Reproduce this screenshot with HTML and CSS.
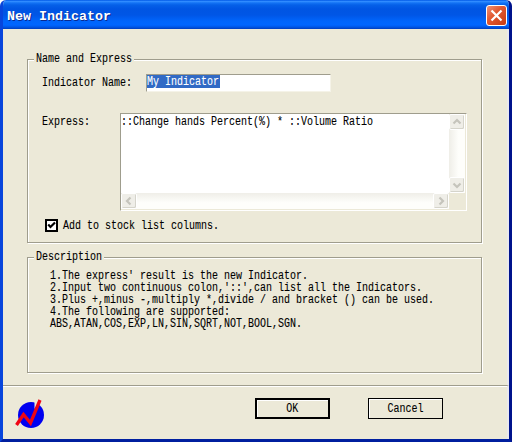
FILE: index.html
```html
<!DOCTYPE html>
<html lang="en">
<head>
<meta charset="utf-8">
<title>New Indicator</title>
<link rel="stylesheet" href="styles.css">
</head>
<body>
<div class="window">
  <header class="titlebar">
    <h1 class="title">New Indicator</h1>
    <button class="close" aria-label="Close"><svg width="21" height="21" viewBox="0 0 21 21"><path d="M5.500 5.500l10 10M15.500 5.500l-10 10" stroke="#fff" stroke-width="2.2" fill="none"/></svg></button>
  </header>
  <main class="content">
    <section class="group group-express">
      <h2 class="legend"><span class="t">Name and Express</span></h2>
      <div class="row row-name">
        <label class="label"><span class="t">Indicator Name:</span></label>
        <div class="input"><span class="selected"><span class="t">My Indicator</span></span></div>
      </div>
      <div class="row row-express">
        <label class="label"><span class="t">Express:</span></label>
        <div class="textarea">
          <div class="text"><span class="t">::Change hands Percent(%) * ::Volume Ratio</span></div>
          <div class="vbar">
            <i class="arrow"><svg viewBox="0 0 14 14"><path d="M3.5 8.5L7 5l3.5 3.5"/></svg></i>
            <i class="arrow"><svg viewBox="0 0 14 14"><path d="M3.5 5.5L7 9l3.5-3.5"/></svg></i>
          </div>
          <div class="hbar">
            <i class="arrow"><svg viewBox="0 0 14 14"><path d="M8.5 3.5L5 7l3.5 3.5"/></svg></i>
            <i class="arrow"><svg viewBox="0 0 14 14"><path d="M5.5 3.5L9 7l-3.5 3.5"/></svg></i>
          </div>
        </div>
      </div>
      <div class="row row-check">
        <span class="checkbox"><svg width="9" height="9" viewBox="0 0 9 9"><path d="M1.2 3.5l2.3 2.5 4.5-4.5" stroke="#000" stroke-width="2.2" fill="none"/></svg></span>
        <span class="t">Add to stock list columns.</span>
      </div>
    </section>
    <section class="group group-description">
      <h2 class="legend"><span class="t">Description</span></h2>
      <div class="lines"><span class="t">1.The express' result is the new Indicator.
2.Input two continuous colon,'::',can list all the Indicators.
3.Plus +,minus -,multiply *,divide / and bracket () can be used.
4.The following are supported:
ABS,ATAN,COS,EXP,LN,SIN,SQRT,NOT,BOOL,SGN.</span></div>
    </section>
  </main>
  <footer class="footer">
    <svg class="logo" width="30" height="30" viewBox="0 0 30 30">
      <circle cx="16" cy="16" r="13" fill="#0000f0"/>
      <path d="M19.500 2h5l-5 8z" fill="#ece9d8"/>
      <path d="M1.500 26L8.500 15.500 15.500 24 25 1" fill="none" stroke="#f00514" stroke-width="3.3"/>
    </svg>
    <button class="button button-default"><span class="t">OK</span></button>
    <button class="button"><span class="t">Cancel</span></button>
  </footer>
</div>
</body>
</html>
```
FILE: styles.css
```css
* { box-sizing: border-box; }
html { background: #fff; }
body {
  margin: 0;
  width: 512px;
  height: 442px;
  overflow: hidden;
  font: 12px/12px "Liberation Mono", monospace;
  color: #000;
}
h1, h2 { margin: 0; font: inherit; }

.window {
  width: 512px;
  height: 442px;
  display: flex;
  flex-direction: column;
  overflow: hidden;
  border-radius: 6px 6px 0 0;
  background: #ece9d8;
  border: solid;
  border-width: 0 3px 3px;
  border-color: #0831d9 #00138c #001f9f #0845dc;
}

/* monospaced glyphs condensed to a 6px advance */
.t {
  display: inline-block;
  white-space: pre;
  transform: scaleX(0.8333);
  transform-origin: 0 0;
  -webkit-text-stroke: 0.1px currentColor;
}

.titlebar {
  flex: none;
  height: 29px;
  margin: 0 -3px;
  padding: 5px 5px 0 7px;
  display: flex;
  justify-content: space-between;
  background: linear-gradient(#0058e6 0, #2f8bff 1.500px, #1272f4 3px, #0560e8 5px, #0055e3 9px, #0056e6 15px, #0065fb 21px, #0066ff 25px, #0057e6 27px, #003dbd 29px);
}
.title {
  color: #fff;
  font-weight: bold;
  font-size: 13.333px;
  line-height: 23px;
  text-shadow: 1px 1px 0 #0a2a90;
}
.close {
  width: 21px;
  height: 21px;
  padding: 0;
  border: 1px solid #fff;
  border-radius: 3px;
  background: linear-gradient(135deg, #ee9276, #e25a33 40%, #c83a10);
}
.close svg { display: block; margin: -1px; }

.content {
  flex: none;
  height: 356px;
  padding: 30px 25px 0 24px;
  border-right: 2px solid #e9e8ee;
}
.group {
  border: 1px solid #9f9d8d;
  box-shadow: 1px 1px 0 #fff, inset 1px 1px 0 #fff;
}
.group-express { height: 184px; margin-bottom: 14px; }
.group-description { height: 116px; }
.legend {
  height: 12px;
  margin: -7px 0 0 6px;
  padding-left: 2px;
  background: #ece9d8;
}
.group-express .legend { width: 100px; }
.group-description .legend { width: 70px; }

.row { display: flex; }
.row-name { margin: 9px 0 0 14px; }
.row-name .label { width: 104px; padding-top: 3px; }
.input {
  width: 185px;
  height: 18px;
  background: #fff;
  border: 1px solid #f5f3e8;
  border-top-color: #9f9d8d;
  border-left-color: #9f9d8d;
}
.selected {
  display: block;
  width: 73px;
  height: 13px;
  padding-top: 1px;
  background: #316ac5;
  color: #fff;
}
.row-express { margin: 21px 0 0 14px; }
.row-express .label { width: 78px; padding-top: 3px; }
.textarea {
  width: 347px;
  height: 98px;
  display: grid;
  grid-template: 79px 16px / 328px 16px;
  background: #ece9d8;
  border: 1px solid #fff;
  border-top-color: #9f9d8d;
  border-left-color: #9f9d8d;
}
.text { background: #fff; overflow: hidden; padding: 2px 0 0; }
.vbar, .hbar { display: flex; justify-content: space-between; }
.vbar { flex-direction: column; background: linear-gradient(90deg, #efeee8, #fefefb 60%); }
.hbar { background: linear-gradient(#efeee8, #fefefb 60%); }
.arrow {
  width: 16px;
  height: 16px;
  border: 1px solid #fff;
  border-radius: 2px;
  background: #efeee8;
  box-shadow: inset -1px -1px 0 #d5d4cb;
}
.arrow svg {
  display: block;
  width: 14px;
  height: 14px;
  fill: none;
  stroke: #c5c4bc;
  stroke-width: 2.2px;
}
.row-check { margin: 8px 0 0 17px; gap: 5px; align-items: center; }
.checkbox {
  width: 13px;
  height: 13px;
  border: 2px solid #000;
  background: #fff;
}
.checkbox svg { display: block; }
.lines { padding: 7px 0 0 22px; }

.footer {
  flex: 1;
  display: flex;
  align-items: flex-start;
  padding: 13px 0 0;
  border-top: 1px solid #9f9d8d;
  border-right: 2px solid #e9e8ee;
  box-shadow: inset 0 1px 0 #fff;
}
.logo { flex: none; margin: 0 210px 0 12px; }
.button {
  width: 75px;
  height: 21px;
  margin: -1px 38px 0 0;
  padding: 0;
  border: 1px solid #000;
  background: #ece9d8;
  box-shadow: inset 1px 1px 0 #fff;
  color: #000;
  font: inherit;
}
.button-default { border-width: 2px; }
.button .t { transform-origin: 50% 0; }
```
